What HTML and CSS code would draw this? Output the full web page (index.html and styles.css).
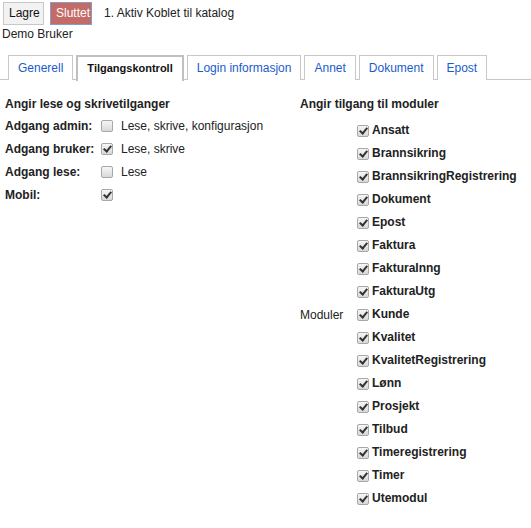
FILE: index.html
```html
<!DOCTYPE html>
<html>
<head>
<meta charset="utf-8">
<link rel="stylesheet" href="styles.css">
</head>
<body>
<div class="topbar">
  <button class="btn btn-save">Lagre</button>
  <button class="btn btn-quit">Sluttet</button>
  <span class="status">1. Aktiv Koblet til katalog</span>
</div>
<div class="user">Demo Bruker</div>
<ul class="tabs">
  <li class="tab">Generell</li>
  <li class="tab active">Tilgangskontroll</li>
  <li class="tab">Login informasjon</li>
  <li class="tab">Annet</li>
  <li class="tab">Dokument</li>
  <li class="tab">Epost</li>
</ul>
<div class="panel">
  <div class="col-left">
    <div class="heading">Angir lese og skrivetilganger</div>
    <table class="perm">
      <tr><td class="lbl">Adgang admin:</td><td class="cb"><span class="box"></span></td><td>Lese, skrive, konfigurasjon</td></tr>
      <tr><td class="lbl">Adgang bruker:</td><td class="cb"><span class="box on"></span></td><td>Lese, skrive</td></tr>
      <tr><td class="lbl">Adgang lese:</td><td class="cb"><span class="box"></span></td><td>Lese</td></tr>
      <tr><td class="lbl">Mobil:</td><td class="cb"><span class="box on"></span></td><td></td></tr>
    </table>
  </div>
  <div class="col-right">
    <div class="heading">Angir tilgang til moduler</div>
    <div class="modrow">
      <div class="modlabel">Moduler</div>
      <ul class="mods">
        <li><span class="box on"></span>Ansatt</li>
        <li><span class="box on"></span>Brannsikring</li>
        <li><span class="box on"></span>BrannsikringRegistrering</li>
        <li><span class="box on"></span>Dokument</li>
        <li><span class="box on"></span>Epost</li>
        <li><span class="box on"></span>Faktura</li>
        <li><span class="box on"></span>FakturaInng</li>
        <li><span class="box on"></span>FakturaUtg</li>
        <li><span class="box on"></span>Kunde</li>
        <li><span class="box on"></span>Kvalitet</li>
        <li><span class="box on"></span>KvalitetRegistrering</li>
        <li><span class="box on"></span>Lønn</li>
        <li><span class="box on"></span>Prosjekt</li>
        <li><span class="box on"></span>Tilbud</li>
        <li><span class="box on"></span>Timeregistrering</li>
        <li><span class="box on"></span>Timer</li>
        <li><span class="box on"></span>Utemodul</li>
      </ul>
    </div>
  </div>
</div>
</body>
</html>
```
FILE: styles.css
```css
* { box-sizing: border-box; }
body {
  margin: 0;
  font-family: "Liberation Sans", Arial, sans-serif;
  font-size: 12px;
  color: #222;
  background: #fff;
}
.topbar {
  display: flex;
  align-items: center;
  padding: 1px 0 0 3px;
  height: 25px;
}
.btn {
  font-family: "Liberation Sans", Arial, sans-serif;
  font-size: 12px;
  height: 23px;
  padding: 0 5px;
  border-radius: 0;
  margin: 0;
}
.btn-save {
  width: 41px;
  background: #f2f2f2;
  border: 1px solid #c8c8c8;
  color: #111;
}
.btn-quit {
  width: 42px;
  margin-left: 6px;
  background: #c46a67;
  border: 1px solid #7f9fce;
  color: #fff;
}
.status {
  margin-left: 12px;
}
.user {
  padding: 2px 0 0 2px;
  height: 20px;
}
.tabs {
  list-style: none;
  margin: 10px 0 0 0;
  padding: 0 0 0 8px;
  display: flex;
  gap: 3px;
  border-bottom: 1px solid #c8c8c8;
  height: 25px;
}
.tab {
  border: 1px solid #c8c8c8;
  border-bottom: none;
  padding: 0 9px;
  line-height: 24px;
  height: 25px;
  color: #1a5ccc;
  background: #fff;
}
.tab.active {
  color: #111;
  font-weight: bold;
  font-size: 11px;
  height: 26px;
  margin-bottom: -1px;
  border-color: #c0c0c0;
  border-width: 2px 2px 0 2px;
  line-height: 23px;
  padding: 0 9px;
}
.panel {
  display: flex;
  padding: 15px 0 0 5px;
}
.col-left {
  width: 295px;
}
.heading {
  font-weight: bold;
  height: 18px;
  line-height: 18px;
}
.perm {
  border-collapse: collapse;
  margin-top: 1px;
}
.perm td {
  height: 23px;
  padding: 0;
  vertical-align: middle;
  white-space: nowrap;
}
.perm .lbl {
  font-weight: bold;
  width: 96px;
}
.perm .cb {
  width: 20px;
}
.box {
  display: inline-block;
  width: 12px;
  height: 12px;
  border: 1px solid #a8a8a8;
  border-radius: 2px;
  background: linear-gradient(#f6f6f6, #d8d8d8);
  vertical-align: -2px;
  position: relative;
}
.box.on::after {
  content: "";
  position: absolute;
  left: 3px;
  top: 0px;
  width: 3px;
  height: 6px;
  border: solid #333;
  border-width: 0 2px 2px 0;
  transform: rotate(40deg);
}
.col-right {
  flex: 1;
}
.modrow {
  display: flex;
  align-items: center;
  margin-top: 6px;
}
.modlabel {
  width: 57px;
}
.mods {
  list-style: none;
  margin: 0;
  padding: 0;
}
.mods li {
  height: 23px;
  line-height: 23px;
  font-weight: bold;
  display: flex;
  align-items: center;
  gap: 3px;
}
```
